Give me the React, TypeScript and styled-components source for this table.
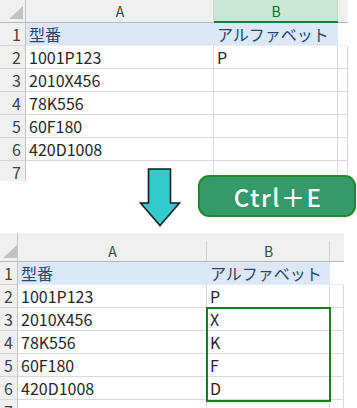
import React from "react";
import styled, { createGlobalStyle } from "styled-components";

const GlobalStyle = createGlobalStyle`
  html, body {
    margin: 0;
    padding: 0;
    background: #ffffff;
  }
  body {
    font-family: "Noto Sans CJK JP", "Noto Sans", sans-serif;
  }
`;

const Page = styled.div`
  width: 357px;
  height: 408px;
  overflow: hidden;
  background: #ffffff;
`;

const Sheet = styled.div<{ $cols: string; $head: number; $height: number }>`
  position: relative;
  display: grid;
  grid-template-columns: ${(p) => p.$cols};
  grid-template-rows: ${(p) => p.$head}px;
  grid-auto-rows: 23px;
  width: max-content;
  height: ${(p) => p.$height}px;
  overflow: hidden;
  font-family: "Noto Sans CJK JP", "Noto Sans", sans-serif;
`;

const Corner = styled.div<{ $inset: number }>`
  position: relative;
  box-sizing: border-box;
  background: #f0f0f0;
  border-right: 1px solid #c4c4c4;
  border-bottom: 1px solid #b8b8b8;
  &::after {
    content: "";
    position: absolute;
    right: ${(p) => p.$inset}px;
    bottom: 3px;
    width: 0;
    height: 0;
    border-left: 14px solid transparent;
    border-bottom: 13px solid #c2c2c2;
  }
`;

const ColHead = styled.div<{ $sel?: boolean; $sepTop: number; $padTop: number; $last?: boolean }>`
  box-sizing: border-box;
  display: flex;
  align-items: center;
  justify-content: center;
  padding-top: ${(p) => p.$padTop}px;
  font-size: 14px;
  color: ${(p) => (p.$sel ? "#0f6b35" : "#444444")};
  background-color: ${(p) => (p.$sel ? "#c8e8d4" : "#f0f0f0")};
  background-image: ${(p) =>
    p.$last ? "none" : "linear-gradient(#d2d2d2, #d2d2d2)"};
  background-repeat: no-repeat;
  background-position: right bottom;
  background-size: 1px calc(100% - ${(p) => p.$sepTop}px);
  border-bottom: ${(p) => (p.$sel ? "2px solid #1d7a43" : "1px solid #b8b8b8")};
`;

const RowHead = styled.div<{ $align: "center" | "flex-end" }>`
  box-sizing: border-box;
  display: flex;
  align-items: center;
  justify-content: ${(p) => p.$align};
  padding-right: ${(p) => (p.$align === "flex-end" ? 4 : 0)}px;
  background: #f0f0f0;
  border-right: 1px solid #c4c4c4;
  border-bottom: 1px solid #d6d6d6;
  font-size: 16px;
  color: #444444;
`;

const Cell = styled.div<{ $heading?: boolean; $blank?: boolean }>`
  box-sizing: border-box;
  display: flex;
  align-items: center;
  padding-left: 3px;
  white-space: nowrap;
  overflow: hidden;
  font-size: 16px;
  color: ${(p) => (p.$heading ? "#28466e" : "#262626")};
  background: ${(p) => (p.$heading && !p.$blank ? "#dce8f6" : "#ffffff")};
  border-right: 1px solid
    ${(p) => (p.$heading && !p.$blank ? "#dce8f6" : p.$heading ? "#ffffff" : "#dadada")};
  border-bottom: 1px solid ${(p) => (p.$heading ? "#e6eef8" : "#dadada")};
`;

const Selection = styled.div`
  position: absolute;
  box-sizing: border-box;
  border: 2px solid #17801d;
  pointer-events: none;
`;

const Band = styled.div`
  position: relative;
  z-index: 1;
  display: flex;
  align-items: flex-start;
  height: 57px;
  margin-top: -13px;
  padding-left: 139px;
`;

const Arrow = styled.svg`
  display: block;
  flex: none;
`;

const KeyBadge = styled.div`
  box-sizing: border-box;
  flex: none;
  width: 158px;
  height: 42px;
  margin-top: 7px;
  margin-left: 17px;
  display: flex;
  align-items: center;
  justify-content: center;
  padding-left: 2px;
  background: #36996a;
  border: 2px solid #1f8a2a;
  border-radius: 11px;
  color: #ffffff;
  font-family: "Noto Sans CJK JP", "Noto Sans", sans-serif;
  font-weight: 500;
  font-size: 24px;
  letter-spacing: 1.5px;
`;

const Lower = styled.div`
  margin-top: 8px;
`;

type SheetProps = {
  cols: number[];
  head: number;
  height: number;
  rowAlign: "center" | "flex-end";
  sepTop: number;
  padTop: number;
  cornerInset: number;
  selectB: boolean;
  data: [string, string][];
  selection?: { left: number; top: number; width: number; height: number };
};

const Grid: React.FC<SheetProps> = ({
  cols,
  head,
  height,
  rowAlign,
  sepTop,
  padTop,
  cornerInset,
  selectB,
  data,
  selection,
}) => (
  <Sheet $cols={cols.map((c) => `${c}px`).join(" ")} $head={head} $height={height}>
    <Corner $inset={cornerInset} />
    <ColHead $sepTop={sepTop} $padTop={padTop}>A</ColHead>
    <ColHead $sel={selectB} $sepTop={sepTop} $padTop={padTop}>B</ColHead>
    <ColHead $sepTop={sepTop} $padTop={padTop} $last />
    {data.map(([a, b], i) => (
      <React.Fragment key={i}>
        <RowHead $align={rowAlign}>{i + 1}</RowHead>
        <Cell $heading={i === 0}>{a}</Cell>
        <Cell $heading={i === 0}>{b}</Cell>
        <Cell $heading={i === 0} $blank={i === 0} />
      </React.Fragment>
    ))}
    {selection && (
      <Selection
        style={{
          left: selection.left,
          top: selection.top,
          width: selection.width,
          height: selection.height,
        }}
      />
    )}
  </Sheet>
);

const before: [string, string][] = [
  ["型番", "アルファベット"],
  ["1001P123", "P"],
  ["2010X456", ""],
  ["78K556", ""],
  ["60F180", ""],
  ["420D1008", ""],
  ["", ""],
];

const after: [string, string][] = [
  ["型番", "アルファベット"],
  ["1001P123", "P"],
  ["2010X456", "X"],
  ["78K556", "K"],
  ["60F180", "F"],
  ["420D1008", "D"],
  ["", ""],
];

export default function App() {
  return (
    <Page>
      <GlobalStyle />
      <Grid
        cols={[26, 188, 124, 10]}
        head={23}
        height={181}
        rowAlign="flex-end"
        sepTop={0}
        padTop={0}
        cornerInset={2}
        selectB
        data={before}
      />
      <Band>
        <Arrow width="42" height="59" viewBox="0 0 42 59">
          <polygon
            points="9.5,1 31.5,1 31.5,35 40.5,35 21,57.5 1.5,35 9.5,35"
            fill="#33cccc"
            stroke="#1a1a1a"
            strokeWidth="1.6"
            strokeLinejoin="miter"
          />
        </Arrow>
        <KeyBadge>Ctrl＋E</KeyBadge>
      </Band>
      <Lower>
        <Grid
          cols={[18, 189, 123, 14]}
          head={29}
          height={175}
          rowAlign="center"
          sepTop={8}
          padTop={8}
          cornerInset={0}
          selectB={false}
          data={after}
          selection={{ left: 206, top: 74, width: 125, height: 95 }}
        />
      </Lower>
    </Page>
  );
}
